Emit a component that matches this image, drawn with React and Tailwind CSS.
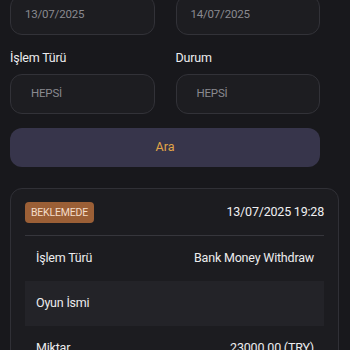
import React from "react";

function Field({ label, value, center = false }) {
  return (
    <div className="flex flex-col">
      {label ? <span className="mb-[6px] text-[12.5px] tracking-[-0.2px] leading-[20px] text-[#ececee]">{label}</span> : null}
      <div className="flex h-[40px] items-center rounded-[12px] border border-[#323238] bg-[#1d1d21] px-[14px]">
        <span className={`text-[11.5px] tracking-[-0.2px] text-[#8a8a90] ${center ? "pl-[6px]" : ""}`}>{value}</span>
      </div>
    </div>
  );
}

const rows = [
  { label: "İşlem Türü", value: "Bank Money Withdraw" },
  { label: "Oyun İsmi", value: "" },
  { label: "Miktar", value: "23000.00 (TRY)" },
];

export default function App() {
  return (
    <div
      className="h-[350px] w-[350px] overflow-hidden bg-[#18181c] pl-[10px] pr-[11px]"
      style={{ fontFamily: "Roboto, 'Noto Sans', sans-serif" }}
    >
      <div className="mt-[-5px] w-[310px]">
        <div className="grid grid-cols-2 gap-x-[21px]">
          <Field value="13/07/2025" />
          <Field value="14/07/2025" />
        </div>
        <div className="mt-[13px] grid grid-cols-2 gap-x-[21px]">
          <Field label="İşlem Türü" value="HEPSİ" center />
          <Field label="Durum" value="HEPSİ" center />
        </div>
        <button
          type="button"
          className="mt-[14px] flex h-[39px] w-full items-center justify-center rounded-[12px] bg-[#37354b] text-[12.5px] text-[#e2a547]"
        >
          Ara
        </button>
      </div>

      <div className="mt-[21px] rounded-[12px] border border-[#303036] bg-[#1c1c20] px-[14px] pt-[13px]">
        <div className="flex items-center justify-between pb-[12px]">
          <span className="rounded-[4px] bg-[#9b5f36] px-[6px] py-[3px] text-[10.5px] tracking-[-0.2px] leading-[15px] text-[#f3dcc8]">
            BEKLEMEDE
          </span>
          <span className="text-[12.5px] tracking-[-0.2px] text-[#f0f0f2]">13/07/2025 19:28</span>
        </div>
        <div className="border-t border-[#36363c]">
          {rows.map((row, i) => (
            <div
              key={row.label}
              className={`flex h-[45px] items-center justify-between pl-[11px] pr-[10px] text-[12.5px] tracking-[-0.2px] text-[#ececee] ${
                i % 2 === 1 ? "bg-[#232328]" : ""
              }`}
            >
              <span>{row.label}</span>
              <span>{row.value}</span>
            </div>
          ))}
        </div>
      </div>
    </div>
  );
}
